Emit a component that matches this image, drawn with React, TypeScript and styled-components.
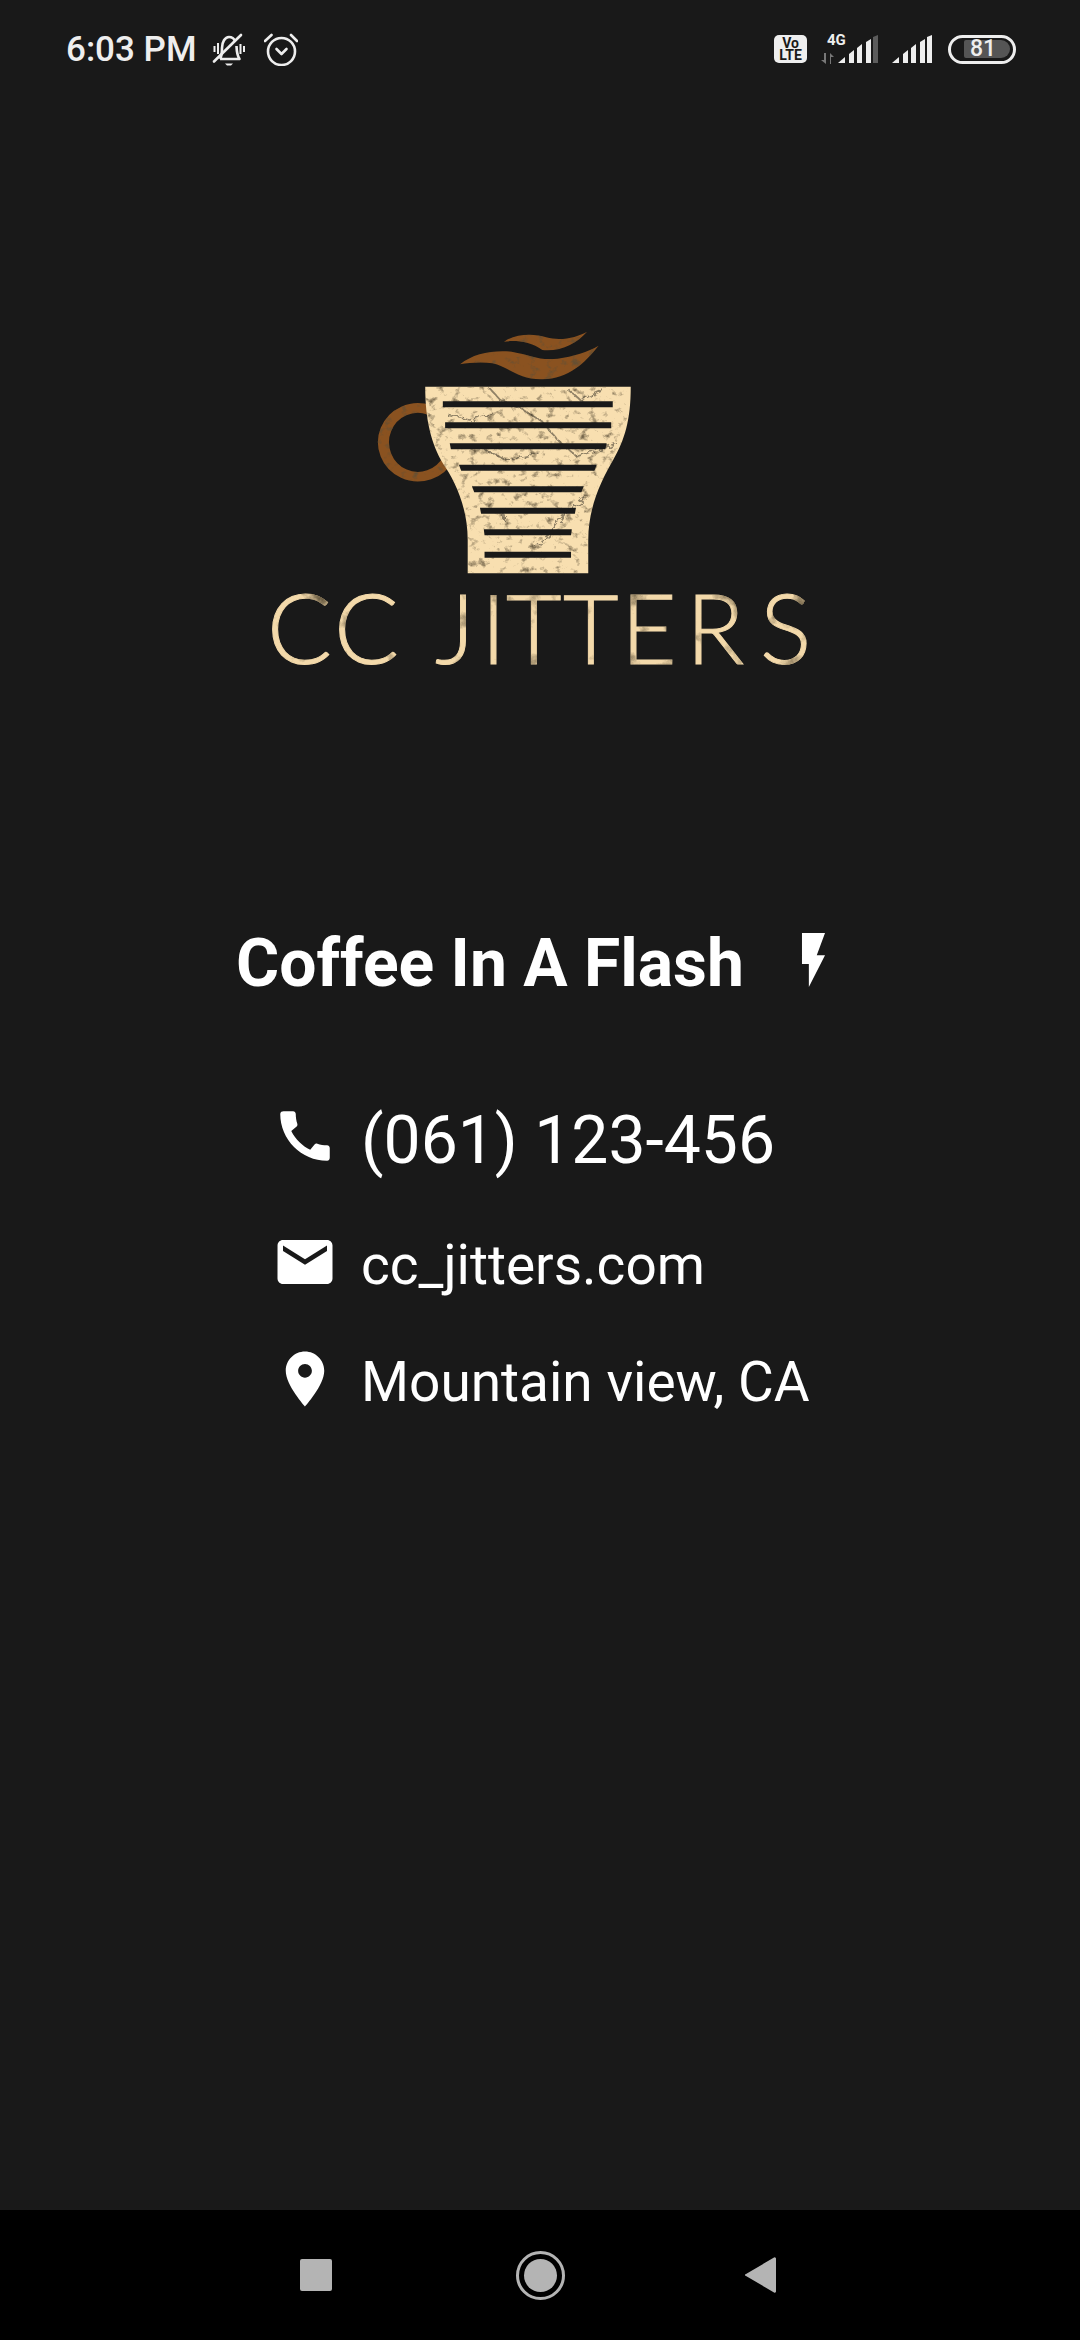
import React from "react";
import styled, { createGlobalStyle } from "styled-components";

const Global = createGlobalStyle`
  html, body { margin: 0; padding: 0; background: #191919; }
  * { box-sizing: border-box; }
`;

const Page = styled.div`
  width: 1080px;
  height: 2340px;
  display: flex;
  flex-direction: column;
  background: #191919;
  font-family: Roboto, "Noto Sans", sans-serif;
  color: #fff;
  overflow: hidden;
`;

const StatusBar = styled.header`
  height: 98px;
  flex: none;
  display: flex;
  align-items: center;
  justify-content: space-between;
  padding: 0 64px 0 66px;
  color: #eee;
`;

const StatusGroup = styled.div<{ $gap: number }>`
  display: flex;
  align-items: center;
  gap: ${(p) => p.$gap}px;
`;

const Time = styled.span`
  font-size: 35px;
  font-weight: 500;
  line-height: 40px;
  margin: 2px -3px 0 0;
`;

const VoLte = styled.div`
  width: 33px;
  height: 28px;
  border-radius: 5px;
  background: #eee;
  color: #191919;
  display: flex;
  flex-direction: column;
  align-items: center;
  justify-content: center;
  font-size: 14px;
  font-weight: 700;
  line-height: 12px;
`;

const SignalWrap = styled.div`
  position: relative;
  display: flex;
`;

const NetworkTag = styled.span`
  position: absolute;
  left: 6px;
  top: -2px;
  font-size: 15px;
  font-weight: 700;
  line-height: 14px;
  color: #eee;
`;

const Battery = styled.div`
  width: 68px;
  height: 29px;
  margin-left: 2px;
  border: 3px solid #eee;
  border-radius: 15px;
  display: flex;
  align-items: center;
  padding-left: 13px;
`;

const BatteryFill = styled.div`
  width: 46px;
  height: 18px;
  background: #555;
  border-radius: 2px 9px 9px 2px;
  padding-left: 6px;
  font-size: 23px;
  font-weight: 500;
  line-height: 18px;
  color: #eee;
`;

const Main = styled.main`
  flex: 1;
  display: flex;
  flex-direction: column;
`;

const LogoMark = styled.svg`
  display: block;
  width: 600px;
  height: 400px;
  margin: 202px 0 0 240px;
  flex: none;
`;

const WordMark = styled.text`
  font-family: Lato, sans-serif;
  font-weight: 300;
  font-size: 96px;
  fill: #f3d9aa;
  stroke: #f3d9aa;
  stroke-width: 1px;
`;

const TagLine = styled.div`
  margin: 224px 0 0 236px;
  height: 80px;
  display: flex;
  align-items: center;
`;

const Heading = styled.h1`
  margin: 0;
  width: 564px;
  font-size: 66px;
  font-weight: 700;
  line-height: 82px;
  color: #fff;
  white-space: nowrap;
`;

const BoltIcon = styled.svg`
  width: 27px;
  height: 54px;
  fill: #fff;
  margin-top: -8px;
`;

const ContactList = styled.ul`
  list-style: none;
  margin: 99px 0 0 272px;
  padding: 0;
  display: flex;
  flex-direction: column;
`;

const ContactRow = styled.li<{ $height: number }>`
  height: ${(p) => p.$height}px;
  display: flex;
  align-items: flex-start;
  gap: 23px;
`;

const ContactIcon = styled.svg`
  width: 66px;
  height: 66px;
  fill: #fff;
  flex: none;
`;

const ContactText = styled.span<{ $size: number; $line: number }>`
  font-size: ${(p) => p.$size}px;
  line-height: ${(p) => p.$line}px;
  color: #fff;
  white-space: nowrap;
`;

const NavBar = styled.nav`
  height: 130px;
  flex: none;
  background: #000;
  display: flex;
  align-items: center;
  padding-left: 300px;
`;

const NavSquare = styled.div`
  width: 32px;
  height: 32px;
  border-radius: 2px;
  background: #b4b4b4;
  margin-right: 184px;
`;

const NavHome = styled.div`
  width: 49px;
  height: 49px;
  border-radius: 50%;
  border: 3px solid #b4b4b4;
  display: flex;
  align-items: center;
  justify-content: center;
  margin-right: 180px;
  &::after {
    content: "";
    width: 33px;
    height: 33px;
    border-radius: 50%;
    background: #b4b4b4;
  }
`;

const NavBack = styled.svg`
  width: 31px;
  height: 36px;
  fill: #b4b4b4;
`;

const MutedBell = () => (
  <svg width="34" height="33" viewBox="0 0 34 33" fill="none" stroke="#eee" strokeWidth="2.6">
    <path d="M8 26c2-3 2-6 2-11 0-6 3-11 7-11 3 0 5 1.500 6 4M24.500 13c.2 5 .3 9 3 13H8" strokeLinejoin="round" />
    <path d="M2 28.500 29 2" strokeLinecap="round" />
    <path d="M2.500 13v6M6 10v11M28.500 11v10M32 13v6" strokeWidth="2" />
    <path d="M13 30.500h8l-2 2h-4z" fill="#eee" stroke="none" />
  </svg>
);

const AlarmIcon = () => (
  <svg width="34" height="33" viewBox="0 0 34 33" fill="none" stroke="#eee" strokeWidth="2.600" strokeLinecap="round" strokeLinejoin="round">
    <circle cx="17.500" cy="18.500" r="13.500" />
    <path d="M12.500 16l5 5 5-5" />
    <path d="M1 8l6.500-6M27 2l6 6" />
  </svg>
);

const Bars = ({ dimLast }: { dimLast?: boolean }) => (
  <>
    <polygon points="0,28 7,22 7,28" fill="#eee" />
    <polygon points="11,19 16,15 16,28 11,28" fill="#eee" />
    <polygon points="19,13 24,9 24,28 19,28" fill="#eee" />
    <polygon points="28,7 33,4 33,28 28,28" fill="#eee" />
    <polygon points="35,2 40,0 40,28 35,28" fill={dimLast ? "#5c5c5c" : "#eee"} />
  </>
);

const bars: [number, number, number, number, number][] = [
  [304, 530, 974, 530, 974],
  [367, 536, 970, 536, 970],
  [430, 548, 958, 551, 955],
  [494, 572, 932, 578, 926],
  [559, 606, 898, 612, 892],
  [623, 627, 878, 630, 875],
  [688, 637, 867, 639, 865],
  [755, 639, 865, 639, 865],
];

const CUP =
  "M484 260H1021C1021 360 1005 420 975 480C945 540 910 620 910 720V820H595V720C595 620 560 540 530 490C500 430 484 360 484 260Z";

const Logo = () => (
  <LogoMark viewBox="0 0 600 400">
    <defs>
      <filter id="grain" x="-6%" y="-6%" width="112%" height="112%" colorInterpolationFilters="sRGB">
        <feTurbulence type="fractalNoise" baseFrequency="0.045" numOctaves="6" seed="7" result="noise" />
        <feColorMatrix
          in="noise"
          type="matrix"
          values="0 0 0 0 0.36  0 0 0 0 0.31  0 0 0 0 0.22  2.6 0 0 0 -1.45"
          result="speck"
        />
        <feComposite in="speck" in2="SourceAlpha" operator="in" result="clipped" />
        <feMerge>
          <feMergeNode in="SourceGraphic" />
          <feMergeNode in="clipped" />
        </feMerge>
      </filter>
      <filter id="vein" x="0" y="0" width="100%" height="100%">
        <feTurbulence type="fractalNoise" baseFrequency="0.05" numOctaves="3" seed="3" result="n" />
        <feDisplacementMap in="SourceGraphic" in2="n" scale="26" />
        <feGaussianBlur stdDeviation="0.7" />
      </filter>
      <clipPath id="cupClip">
        <path d={CUP} />
      </clipPath>
    </defs>
    <g transform="scale(0.3827 0.3333)">
      <g filter="url(#grain)">
        <path d="M495 330A90 103 0 1 0 545 474" fill="none" stroke="#8a5220" strokeWidth="29" />
        <path d="M690 125C720 100 770 100 800 112C840 124 880 112 907 95C880 130 840 155 790 150C760 125 720 120 690 125Z" fill="#8a5220" />
        <path d="M575 193C610 160 660 150 710 155C760 165 780 182 830 176C870 170 910 155 937 137C900 190 860 235 790 238C730 240 700 200 660 190C630 185 600 188 575 193Z" fill="#8a5220" />
        <path d={CUP} fill="#f8dfb0" />
      </g>
      <g clipPath="url(#cupClip)">
        <g filter="url(#vein)" fill="none" stroke="#3a352b" strokeOpacity="0.55" strokeWidth="5">
          <path d="M650 262L680 300L740 330L790 365L830 420L880 470L985 430" />
          <path d="M850 262L890 300L950 270M540 345L600 360L660 340" />
          <path d="M770 740L810 700L850 640L905 590M690 640V665M640 450L700 480L780 460" />
        </g>
      </g>
      {bars.map(([y, x1, x2, x3, x4]) => (
        <polygon key={y} points={`${x1},${y} ${x2},${y} ${x4},${y + 18} ${x3},${y + 18}`} fill="#191919" />
      ))}
    </g>
    <WordMark filter="url(#grain)" y="364" x="27 94 160 195 241 266 323 381 446 520">
      CC JITTERS
    </WordMark>
  </LogoMark>
);

export default function App() {
  return (
    <Page>
      <Global />
      <StatusBar>
        <StatusGroup $gap={18}>
          <Time>6:03 PM</Time>
          <MutedBell />
          <AlarmIcon />
        </StatusGroup>
        <StatusGroup $gap={14}>
          <VoLte>
            <span>Vo</span>
            <span>LTE</span>
          </VoLte>
          <SignalWrap>
            <NetworkTag>4G</NetworkTag>
            <svg width="57" height="29" viewBox="-17 0 57 29">
              <path d="M-12 18v11l-5-4h3v-7zM-8 29V18l4 4h-3v7z" fill="#777" />
              <Bars dimLast />
            </svg>
          </SignalWrap>
          <svg width="40" height="29" viewBox="0 0 40 29">
            <Bars />
          </svg>
          <Battery>
            <BatteryFill>81</BatteryFill>
          </Battery>
        </StatusGroup>
      </StatusBar>
      <Main>
        <Logo />
        <TagLine>
          <Heading>Coffee In A Flash</Heading>
          <BoltIcon viewBox="0 0 67 157">
            <polygon points="0,0 67,0 43,65 67,65 20,157 20,90 0,90" />
          </BoltIcon>
        </TagLine>
        <ContactList>
          <ContactRow $height={126}>
            <ContactIcon viewBox="0 0 24 24">
              <path d="M20.010 15.380c-1.230 0-2.420-.2-3.530-.56-.35-.12-.74-.03-1.010.24l-1.570 1.970c-2.830-1.350-5.480-3.900-6.890-6.830l1.950-1.660c.27-.28.35-.67.24-1.020-.37-1.110-.56-2.300-.56-3.530 0-.54-.45-.99-.99-.99H4.190C3.650 3 3 3.240 3 3.990 3 13.280 10.730 21 20.010 21c.71 0 .99-.63.99-1.180v-3.450c0-.54-.45-.99-.99-.99z" />
            </ContactIcon>
            <ContactText $size={66} $line={75}>(061) 123-456</ContactText>
          </ContactRow>
          <ContactRow $height={117}>
            <ContactIcon viewBox="0 0 24 24">
              <path d="M20 4H4c-1.100 0-1.990.9-1.990 2L2 18c0 1.100.9 2 2 2h16c1.100 0 2-.9 2-2V6c0-1.100-.9-2-2-2zm0 4l-8 5-8-5V6l8 5 8-5v2z" />
            </ContactIcon>
            <ContactText $size={55} $line={72}>cc_jitters.com</ContactText>
          </ContactRow>
          <ContactRow $height={72}>
            <ContactIcon viewBox="0 0 24 24">
              <path d="M12 2C8.130 2 5 5.130 5 9c0 5.250 7 13 7 13s7-7.750 7-13c0-3.870-3.130-7-7-7zm0 9.500c-1.380 0-2.500-1.120-2.500-2.500s1.120-2.500 2.500-2.500 2.500 1.120 2.500 2.500-1.120 2.500-2.500 2.500z" />
            </ContactIcon>
            <ContactText $size={55} $line={72}>Mountain view, CA</ContactText>
          </ContactRow>
        </ContactList>
      </Main>
      <NavBar>
        <NavSquare />
        <NavHome />
        <NavBack viewBox="0 0 31 36">
          <path d="M29 0.500 1 17a1 1 0 0 0 0 2l28 16.500a1.300 1.300 0 0 0 2-1V1.500a1.300 1.300 0 0 0-2-1z" />
        </NavBack>
      </NavBar>
    </Page>
  );
}
